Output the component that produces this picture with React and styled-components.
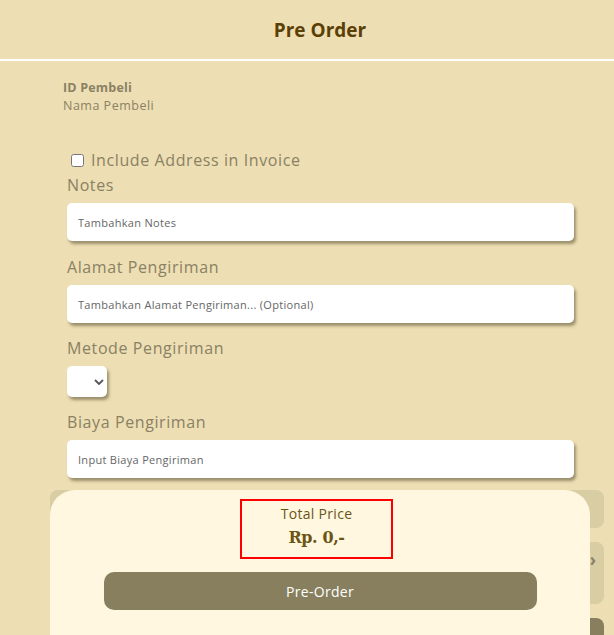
import React, { useState } from "react";
import styled, { createGlobalStyle } from "styled-components";

const GlobalStyle = createGlobalStyle`
  html, body {
    margin: 0;
    padding: 0;
    background-color: #eddeb3;
    font-family: "Open Sans", "Noto Sans", sans-serif;
  }
  * {
    box-sizing: border-box;
  }
`;

const Page = styled.div`
  position: relative;
  width: 614px;
  height: 635px;
  overflow: hidden;
  background-color: #eddeb3;
`;

const Header = styled.div`
  height: 61px;
  display: flex;
  align-items: center;
  justify-content: center;
  padding-left: 26px;
  border-bottom: 2px solid #ffffff;
`;

const Title = styled.h1`
  margin: 0;
  font-size: 19px;
  font-weight: 700;
  color: #5b3f07;
`;

const Buyer = styled.div`
  display: flex;
  flex-direction: column;
  padding: 18px 0 0 63px;
  color: #8a8164;
  font-size: 12.5px;
  line-height: 18px;
  letter-spacing: 0.5px;
`;

const BuyerId = styled.span`
  font-weight: 700;
  letter-spacing: 0.2px;
`;

const Form = styled.form`
  display: flex;
  flex-direction: column;
  padding: 34px 40px 0 67px;
`;

const CheckRow = styled.label`
  display: flex;
  align-items: center;
  gap: 7px;
  margin-left: 4px;
  font-size: 16px;
  letter-spacing: 0.6px;
  color: #8a8164;
  height: 22px;
`;

const Check = styled.input`
  margin: 0;
  width: 13px;
  height: 13px;
`;

const Label = styled.div`
  font-size: 16px;
  letter-spacing: 0.6px;
  color: #8a8164;
  height: 22px;
  display: flex;
  align-items: center;
  margin-top: ${({ $top }) => $top || 4}px;
  margin-bottom: 7px;
`;

const Input = styled.input`
  width: 507px;
  height: 38px;
  border: none;
  border-radius: 5px;
  background-color: #ffffff;
  box-shadow: 2px 3px 3px rgba(90, 80, 50, 0.55);
  padding: 0 11px;
  font-family: inherit;
  font-size: 11px;
  letter-spacing: 0.3px;
  color: #555;
  outline: none;

  &::placeholder {
    color: #666;
  }
`;

const Select = styled.select`
  width: 40px;
  height: 31px;
  border: none;
  border-radius: 5px;
  background-color: #ffffff;
  box-shadow: 2px 3px 3px rgba(90, 80, 50, 0.55);
  appearance: none;
  padding: 0;
  background-image: url("data:image/svg+xml;utf8,<svg xmlns='http://www.w3.org/2000/svg' width='10' height='6'><path d='M1 1l4 4 4-4' stroke='%23555' stroke-width='1.8' fill='none'/></svg>");
  background-repeat: no-repeat;
  background-position: 27px 13px;
`;

const Behind = styled.div`
  display: flex;
  flex-direction: column;
  gap: 14px;
  margin: 12px 10px 0 50px;
`;

const Slot = styled.div`
  position: relative;
  height: ${({ $h }) => $h}px;
  border-radius: 8px;
  background-color: ${({ $dark }) => ($dark ? "#877f5e" : "#d9cda4")};
`;

const Chevron = styled.span`
  position: absolute;
  right: 8px;
  top: 6px;
  color: #8a8164;
  font-size: 17px;
  font-weight: 700;
`;

const Sheet = styled.div`
  position: absolute;
  left: 50px;
  top: 490px;
  width: 540px;
  height: 200px;
  background-color: #fff7e0;
  border-radius: 25px 25px 0 0;
  display: flex;
  flex-direction: column;
  align-items: center;
  padding-top: 9px;
`;

const TotalBox = styled.div`
  width: 153px;
  height: 60px;
  margin-right: 7px;
  border: 2px solid #ff0000;
  display: flex;
  flex-direction: column;
  align-items: center;
  padding-top: 2px;
`;

const TotalLabel = styled.span`
  font-size: 14px;
  letter-spacing: 0.3px;
  color: #6b5515;
  line-height: 22px;
`;

const TotalValue = styled.span`
  font-family: "DejaVu Serif", serif;
  font-weight: 700;
  font-size: 16px;
  color: #6b5515;
  margin-top: 3px;
  letter-spacing: -0.4px;
`;

const OrderButton = styled.button`
  margin-top: 13px;
  width: 433px;
  height: 38px;
  border: none;
  border-radius: 10px;
  background-color: #877f5e;
  color: #ffffff;
  font-family: inherit;
  font-size: 14px;
  letter-spacing: 0.3px;
`;

export default function App() {
  const [includeAddress, setIncludeAddress] = useState(false);

  return (
    <Page>
      <GlobalStyle />
      <Header>
        <Title>Pre Order</Title>
      </Header>
      <Buyer>
        <BuyerId>ID Pembeli</BuyerId>
        <span>Nama Pembeli</span>
      </Buyer>
      <Form>
        <CheckRow>
          <Check
            type="checkbox"
            checked={includeAddress}
            onChange={(e) => setIncludeAddress(e.target.checked)}
          />
          Include Address in Invoice
        </CheckRow>
        <Label $top={3}>Notes</Label>
        <Input placeholder="Tambahkan Notes" />
        <Label $top={15}>Alamat Pengiriman</Label>
        <Input placeholder="Tambahkan Alamat Pengiriman... (Optional)" />
        <Label $top={14}>Metode Pengiriman</Label>
        <Select />
        <Label $top={14}>Biaya Pengiriman</Label>
        <Input placeholder="Input Biaya Pengiriman" />
      </Form>
      <Behind>
        <Slot $h={38} />
        <Slot $h={62}>
          <Chevron>›</Chevron>
        </Slot>
        <Slot $h={40} $dark />
      </Behind>
      <Sheet>
        <TotalBox>
          <TotalLabel>Total Price</TotalLabel>
          <TotalValue>Rp. 0,-</TotalValue>
        </TotalBox>
        <OrderButton>Pre-Order</OrderButton>
      </Sheet>
    </Page>
  );
}
